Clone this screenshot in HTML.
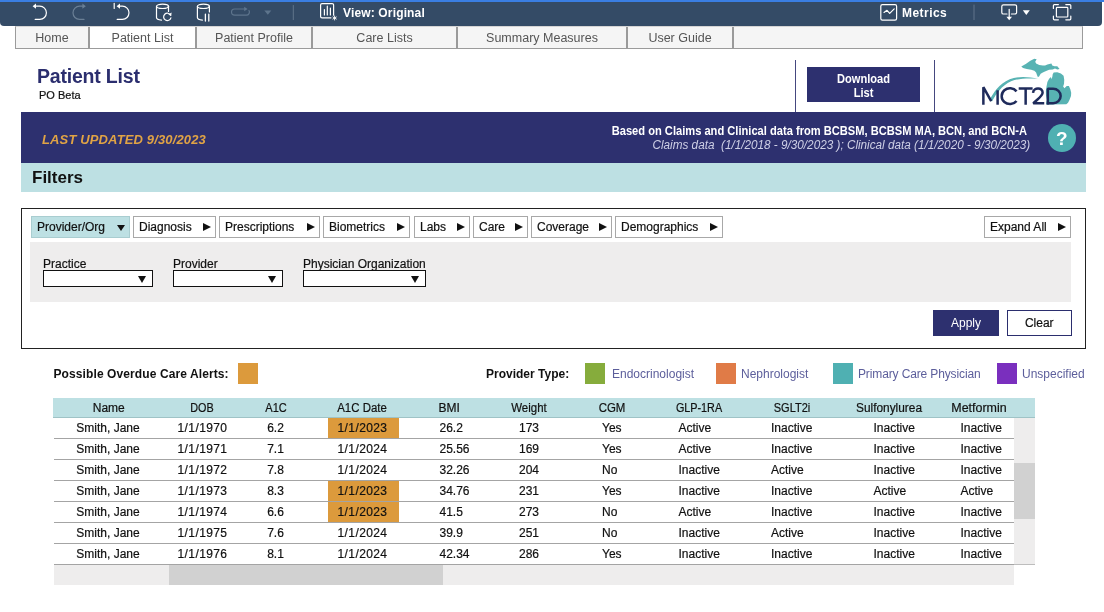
<!DOCTYPE html>
<html>
<head>
<meta charset="utf-8">
<title>Patient List</title>
<style>
*{box-sizing:border-box;margin:0;padding:0}
html,body{width:1104px;height:612px;overflow:hidden;background:#fff}
body{font-family:"Liberation Sans",sans-serif;color:#111;position:relative;will-change:transform}
.abs{position:absolute}
#blue{left:0;top:0;width:1104px;height:2px;background:#3a7ee2}
#tb{left:0;top:2px;width:1101.5px;height:23.6px;background:#344b66;border-radius:0 0 4px 4px}
#tb svg{position:absolute;top:0;left:0}
.tbt{position:absolute;color:#fff;font-weight:bold;font-size:12px;line-height:20px;white-space:nowrap}
#tabs{left:15px;top:26px;width:1068px;height:23px;background:#f5f5f5;border:1px solid #9b9b9b;border-top-color:#d4d4d4}
.tab{position:absolute;top:0;height:21px;border-right:2px solid #9a9a9a;font-size:12.5px;line-height:22px;color:#555;text-align:center;white-space:nowrap}
.tab.sel{background:#fff}
#title{left:37px;top:64px;font-size:19.5px;letter-spacing:-0.2px;font-weight:bold;color:#2b2e6e;line-height:24px;white-space:nowrap}
#sub{-webkit-text-stroke:0.2px #111;left:39px;top:88px;font-size:11px;line-height:14px;color:#111;white-space:nowrap}
.vl{width:1.4px;background:#45477f;top:59.5px;height:53px}
#dl{left:807px;top:67px;width:113px;height:35px;background:#2d306f;color:#fff;font-weight:bold;font-size:12px;line-height:14px;text-align:center;padding-top:5px}
#dl span{display:block;transform:scaleX(0.925)}
#navy{left:21px;top:112px;width:1065px;height:51px;background:#2d306f}
#lu{left:42px;top:132px;letter-spacing:0.14px;font-size:13px;line-height:16px;font-weight:bold;font-style:italic;color:#e0a345;white-space:nowrap}
#b1{right:77px;top:124px;font-size:12px;line-height:14px;font-weight:bold;color:#fff;white-space:nowrap;text-align:right;transform:scaleX(0.927);transform-origin:100% 50%}
#b2{right:74px;top:138px;font-size:12px;line-height:14px;font-style:italic;color:#cfd0e6;white-space:nowrap;text-align:right;transform:scaleX(0.978);transform-origin:100% 50%}
#q{left:1047.6px;top:123.8px;width:28.4px;height:28.4px;border-radius:50%;background:#4fb0b2;color:#fff;font-weight:bold;font-size:19px;line-height:30px;text-align:center}
#band{left:21px;top:163px;width:1065px;height:29px;background:#bde0e3}
#filters{left:32px;top:167px;font-size:17px;line-height:22px;font-weight:bold;color:#111}
#fbox{left:21px;top:208px;width:1065px;height:141px;border:1px solid #222;background:#fff}
#grey{left:30px;top:242px;width:1041px;height:60px;background:#eeeded}
.fb{-webkit-text-stroke:0.2px #111;position:absolute;top:216px;height:22px;border:1px solid #a8a8a8;background:#fff;font-size:12px;line-height:21px;color:#111;white-space:nowrap;padding-left:5px}
.fb.sel{background:#bde0e3;border-color:#a9cdd0}
.fb i{position:absolute;right:4.2px;top:6px;width:0;height:0;border-left:8px solid #111;border-top:4px solid transparent;border-bottom:4px solid transparent}
.fb i.dn{right:4.5px;top:8px;border-left:4px solid transparent;border-right:4px solid transparent;border-top:6.5px solid #111;border-bottom:0}
.lbl{-webkit-text-stroke:0.2px #111;position:absolute;top:257px;font-size:12px;line-height:14px;white-space:nowrap}
.sel2{position:absolute;top:270px;height:17px;border:1px solid #111;background:#fff}
.sel2:after{content:"";position:absolute;right:6px;top:5px;border-left:4px solid transparent;border-right:4px solid transparent;border-top:7px solid #111}
#apply{left:933px;top:310px;width:66px;height:26px;background:#2d306f;color:#fff;font-size:12px;line-height:26px;text-align:center}
#clear{-webkit-text-stroke:0.2px #111;left:1007px;top:310px;width:64.5px;height:26px;background:#fff;border:1px solid #2b2e6e;color:#111;font-size:12px;line-height:24px;text-align:center}
.lg{position:absolute;top:367px;font-size:12px;line-height:14px;white-space:nowrap}
.sw{position:absolute;top:363px;width:20px;height:21px}
.lt{color:#5c5e9b}
#thead{left:53px;top:398px;width:982px;height:20px;background:#bde0e3;border-bottom:1px solid #9fc3c6}
.row{position:absolute;left:53px;width:961px;height:21px}
.row:after{content:"";position:absolute;left:1px;right:0;bottom:0;height:1px;background:#a4a4a4}
.c{position:absolute;font-size:12px;line-height:20px;white-space:nowrap;color:#111;top:0;-webkit-text-stroke:0.2px #111}
.ctr{text-align:center}
.or{position:absolute;left:275px;top:0;width:71px;height:20px;background:#dc9a3c}
#vs{left:1014px;top:418px;width:21px;height:147px;background:#eeeded;border-bottom:1px solid #bdbdbd}
#vst{left:1014px;top:463px;width:21px;height:56px;background:#d1d1d1}
#hs{left:54px;top:565px;width:960px;height:20px;background:#eeeded}
#hst{left:169px;top:565px;width:274px;height:20px;background:#d1d1d1}
</style>
</head>
<body>
<div id="blue" class="abs"></div>
<div id="tb" class="abs"></div>
<svg class="abs" style="left:0;top:0" width="1104" height="28" viewBox="0 0 1104 28" fill="none" stroke="#fff" stroke-width="1.2" stroke-linecap="round" stroke-linejoin="round">
<!-- undo -->
<path d="M35.5 6.2 H39.8 A6.6 6.6 0 0 1 39.8 19.4 H35.2"/>
<path d="M36 3.6 L32.6 6.2 L36 8.8 Z" fill="#fff" stroke="none"/>
<!-- redo (dim) -->
<g stroke="#6a7f95"><path d="M82.8 6.2 H79.6 A6.6 6.6 0 0 0 79.6 19.4 H84"/></g>
<path d="M82.4 3.6 L85.8 6.2 L82.4 8.8 Z" fill="#6a7f95" stroke="none"/>
<!-- revert -->
<path d="M114.2 3.4 V8.4"/>
<path d="M119.5 6.2 H122.4 A6.6 6.6 0 0 1 122.4 19.4 H117.2"/>
<path d="M120 3.6 L116.6 6.2 L120 8.8 Z" fill="#fff" stroke="none"/>
<!-- cylinder refresh -->
<ellipse cx="162.5" cy="6.3" rx="6" ry="2.2"/>
<path d="M156.5 6.3 V17.6 C156.5 19 159 20 161.5 20.1"/>
<path d="M168.5 6.3 V11.5"/>
<path d="M170.6 15.2 A3.7 3.7 0 1 0 170.9 17.8"/>
<path d="M171.6 12.6 L171.2 16 L168.2 14.6 Z" fill="#fff" stroke="none"/>
<!-- cylinder pause -->
<ellipse cx="203.4" cy="6.3" rx="6" ry="2.2"/>
<path d="M197.4 6.3 V17.6 C197.4 19 199.6 20 202.4 20.1"/>
<path d="M209.4 6.3 V12"/>
<path d="M205.4 14.2 V21 M208.8 14.2 V21" stroke-width="1.3"/>
<!-- pill arrow (dim) -->
<g stroke="#5d748c"><path d="M244.5 9 H234.6 A3.1 3.1 0 0 0 234.6 15.2 H246.3 A3.1 3.1 0 0 0 249 10.5"/></g>
<path d="M244.2 6.8 L247.6 9 L244.2 11.2 Z" fill="#5d748c" stroke="none"/>
<path d="M264.3 10.4 H271.3 L267.8 14.8 Z" fill="#5d748c" stroke="none"/>
<!-- separators -->
<path d="M293.3 5.5 V19.6" stroke="#61758b" stroke-width="1"/>
<path d="M974 5 V19.6" stroke="#61758b" stroke-width="1"/>
<!-- view icon -->
<path d="M333.6 15.2 V5 A1.4 1.4 0 0 0 332.2 3.6 H322 A1.4 1.4 0 0 0 320.6 5 V16.4 A1.4 1.4 0 0 0 322 17.8 H331"/>
<path d="M324.4 9.6 V15 M327.3 6.2 V15 M330.4 8 V15" stroke-width="1.2"/>
<path d="M334.6 16 V20 M332.9 17 L336.3 19 M336.3 17 L332.9 19" stroke-width="0.9"/>
<!-- metrics icon -->
<rect x="880.8" y="4.6" width="15.8" height="15.6" rx="1.6"/>
<path d="M884 12.4 L887 10.3 L889.7 13.3 L894.2 8.8"/>
<!-- download icon -->
<path d="M1007 14 H1003.4 A1.6 1.6 0 0 1 1001.8 12.4 V6.4 A1.6 1.6 0 0 1 1003.4 4.8 H1015 A1.6 1.6 0 0 1 1016.6 6.4 V12.4 A1.6 1.6 0 0 1 1015 14 H1011.4"/>
<path d="M1009.2 9.4 V17.4"/>
<path d="M1006.4 16.8 H1012 L1009.2 20.2 Z" fill="#fff" stroke="none"/>
<path d="M1022.8 10.2 H1029.8 L1026.3 15 Z" fill="#fff" stroke="none"/>
<!-- fullscreen icon -->
<rect x="1056.4" y="7.4" width="11.4" height="9.6" rx="0.8"/>
<path d="M1053.4 8.4 V5.6 A1 1 0 0 1 1054.4 4.6 H1058.4 M1065.8 4.6 H1069.8 A1 1 0 0 1 1070.8 5.6 V8.4 M1070.8 16 V18.8 A1 1 0 0 1 1069.8 19.8 H1065.8 M1058.4 19.8 H1054.4 A1 1 0 0 1 1053.4 18.8 V16"/>
</svg>
<div class="tbt" style="left:343px;top:3px;letter-spacing:0.15px">View: Original</div>
<div class="tbt" style="left:902px;top:3px;letter-spacing:0.45px">Metrics</div>
<div id="tabs" class="abs">
  <div class="tab" style="left:0;width:74px">Home</div>
  <div class="tab sel" style="left:74px;width:107px">Patient List</div>
  <div class="tab" style="left:181px;width:116px">Patient Profile</div>
  <div class="tab" style="left:297px;width:145px">Care Lists</div>
  <div class="tab" style="left:442px;width:170px">Summary Measures</div>
  <div class="tab" style="left:612px;width:106px">User Guide</div>
</div>
<div id="title" class="abs">Patient List</div>
<div id="sub" class="abs">PO Beta</div>
<div class="abs vl" style="left:795px"></div>
<div class="abs vl" style="left:934px"></div>
<div id="dl" class="abs"><span>Download<br>List</span></div>
<svg class="abs" style="left:970px;top:52px" width="120" height="62" viewBox="0 0 1104 570">
<g fill="#58b3b3">
<path d="M472 133 L513 110 L555 81 L592 62 L613 67 L600 90 L608 106 L637 119 L670 125 L691 125 L712 114 L749 106 L757 123 L778 131 L803 131 L824 156 L803 160 L782 152 L761 160 L728 164 L695 177 L670 189 L650 201 L637 222 L625 232 L617 214 L608 189 L592 172 L563 164 L522 156 L488 148 Z"/>
<path d="M770 189 L803 185 L836 197 L861 218 L867 255 L865 292 L857 317 L869 334 L890 313 L910 313 L923 342 L931 375 L929 404 L915 441 L902 466 L886 480 L704 483 L699 474 L708 441 L699 400 L698 359 L704 317 L712 276 L728 247 L745 230 L749 251 L757 230 L761 205 Z"/>
<path d="M180 440 C 215 375 265 295 365 250 C 450 218 540 228 625 245 C 540 240 450 240 378 268 C 290 308 240 385 202 456 Z"/>
</g>
<g fill="none" stroke="#1f2b5b" stroke-width="23" stroke-linejoin="bevel">
<path d="M123 485 V323 L195 452"/>
<path d="M254 485 V352"/>
<path d="M428 362 A76 73 0 1 0 428 450"/>
<path d="M448 336 H576 M512 336 V485"/>
<path d="M580 375 C 585 320 670 322 668 375 C 667 405 630 425 582 472 H 683"/>
<path d="M716 485 V338 H765 A69 67 0 0 1 765 472 H716"/>
</g>
</svg>
<div id="navy" class="abs"></div>
<div id="lu" class="abs">LAST UPDATED 9/30/2023</div>
<div id="b1" class="abs">Based on Claims and Clinical data from BCBSM, BCBSM MA, BCN, and BCN-A</div>
<div id="b2" class="abs">Claims data&nbsp; (1/1/2018 - 9/30/2023 ); Clinical data (1/1/2020 - 9/30/2023)</div>
<div id="q" class="abs">?</div>
<div id="band" class="abs"></div>
<div id="filters" class="abs">Filters</div>
<div id="fbox" class="abs"></div>
<div id="grey" class="abs"></div>
<div class="fb sel" style="left:31px;width:99px">Provider/Org<i class="dn"></i></div>
<div class="fb" style="left:133px;width:83px">Diagnosis<i></i></div>
<div class="fb" style="left:219px;width:101px">Prescriptions<i></i></div>
<div class="fb" style="left:323px;width:87px">Biometrics<i></i></div>
<div class="fb" style="left:414px;width:56px">Labs<i></i></div>
<div class="fb" style="left:473px;width:55px">Care<i></i></div>
<div class="fb" style="left:531px;width:81px">Coverage<i></i></div>
<div class="fb" style="left:615px;width:108px">Demographics<i></i></div>
<div class="fb" style="left:984px;width:87px">Expand All<i></i></div>
<div class="lbl" style="left:43px">Practice</div>
<div class="lbl" style="left:173px">Provider</div>
<div class="lbl" style="left:303px">Physician Organization</div>
<div class="sel2" style="left:43px;width:110px"></div>
<div class="sel2" style="left:173px;width:110px"></div>
<div class="sel2" style="left:303px;width:123px"></div>
<div id="apply" class="abs">Apply</div>
<div id="clear" class="abs">Clear</div>
<div class="lg" style="left:53.5px;font-weight:bold;letter-spacing:0.1px">Possible Overdue Care Alerts:</div>
<div class="sw" style="left:238px;background:#dc9a3c"></div>
<div class="lg" style="left:486px;font-weight:bold">Provider Type:</div>
<div class="sw" style="left:585px;background:#86ac3c"></div>
<div class="lg lt" style="left:612px">Endocrinologist</div>
<div class="sw" style="left:716px;background:#e07b47"></div>
<div class="lg lt" style="left:741px">Nephrologist</div>
<div class="sw" style="left:833px;background:#4fb0b2"></div>
<div class="lg lt" style="left:858px;letter-spacing:-0.13px">Primary Care Physician</div>
<div class="sw" style="left:997px;background:#7a2fbe"></div>
<div class="lg lt" style="left:1022px">Unspecified</div>

<div id="vs" class="abs"></div><div id="vst" class="abs"></div>
<div id="hs" class="abs"></div><div id="hst" class="abs"></div>
<!--ROWS-->
<div id="thead" class="abs">
<div class="c ctr" style="left:5.75px;width:100px">Name</div>
<div class="c ctr" style="left:99px;width:100px;transform:scaleX(0.9)">DOB</div>
<div class="c ctr" style="left:172.6px;width:100px;transform:scaleX(0.92)">A1C</div>
<div class="c ctr" style="left:259.25px;width:100px;transform:scaleX(0.952)">A1C Date</div>
<div class="c ctr" style="left:346.25px;width:100px">BMI</div>
<div class="c ctr" style="left:426px;width:100px;transform:scaleX(0.954)">Weight</div>
<div class="c ctr" style="left:508.6px;width:100px;transform:scaleX(0.954)">CGM</div>
<div class="c ctr" style="left:596.1px;width:100px;transform:scaleX(0.9)">GLP-1RA</div>
<div class="c ctr" style="left:688.6px;width:100px;transform:scaleX(0.917)">SGLT2i</div>
<div class="c ctr" style="left:786.1px;width:100px;transform:scaleX(0.99)">Sulfonylurea</div>
<div class="c ctr" style="left:876.25px;width:100px;transform:scaleX(1.038)">Metformin</div>
</div>
<div class="row" style="top:418px"><div class="or"></div><div class="c ctr" style="left:5px;width:100px">Smith, Jane</div><div class="c ctr" style="left:99.5px;width:100px;letter-spacing:0.4px">1/1/1970</div><div class="c ctr" style="left:172.5px;width:100px">6.2</div><div class="c ctr" style="left:259.5px;width:100px;letter-spacing:0.4px">1/1/2023</div><div class="c" style="left:386.5px">26.2</div><div class="c ctr" style="left:426px;width:100px">173</div><div class="c" style="left:549px">Yes</div><div class="c" style="left:625.5px">Active</div><div class="c" style="left:718px">Inactive</div><div class="c" style="left:820.5px">Inactive</div><div class="c" style="left:907.5px">Inactive</div></div>
<div class="row" style="top:439px"><div class="c ctr" style="left:5px;width:100px">Smith, Jane</div><div class="c ctr" style="left:99.5px;width:100px;letter-spacing:0.4px">1/1/1971</div><div class="c ctr" style="left:172.5px;width:100px">7.1</div><div class="c ctr" style="left:259.5px;width:100px;letter-spacing:0.4px">1/1/2024</div><div class="c" style="left:386.5px">25.56</div><div class="c ctr" style="left:426px;width:100px">169</div><div class="c" style="left:549px">Yes</div><div class="c" style="left:625.5px">Active</div><div class="c" style="left:718px">Inactive</div><div class="c" style="left:820.5px">Inactive</div><div class="c" style="left:907.5px">Inactive</div></div>
<div class="row" style="top:460px"><div class="c ctr" style="left:5px;width:100px">Smith, Jane</div><div class="c ctr" style="left:99.5px;width:100px;letter-spacing:0.4px">1/1/1972</div><div class="c ctr" style="left:172.5px;width:100px">7.8</div><div class="c ctr" style="left:259.5px;width:100px;letter-spacing:0.4px">1/1/2024</div><div class="c" style="left:386.5px">32.26</div><div class="c ctr" style="left:426px;width:100px">204</div><div class="c" style="left:549px">No</div><div class="c" style="left:625.5px">Inactive</div><div class="c" style="left:718px">Active</div><div class="c" style="left:820.5px">Inactive</div><div class="c" style="left:907.5px">Inactive</div></div>
<div class="row" style="top:481px"><div class="or"></div><div class="c ctr" style="left:5px;width:100px">Smith, Jane</div><div class="c ctr" style="left:99.5px;width:100px;letter-spacing:0.4px">1/1/1973</div><div class="c ctr" style="left:172.5px;width:100px">8.3</div><div class="c ctr" style="left:259.5px;width:100px;letter-spacing:0.4px">1/1/2023</div><div class="c" style="left:386.5px">34.76</div><div class="c ctr" style="left:426px;width:100px">231</div><div class="c" style="left:549px">Yes</div><div class="c" style="left:625.5px">Inactive</div><div class="c" style="left:718px">Inactive</div><div class="c" style="left:820.5px">Active</div><div class="c" style="left:907.5px">Active</div></div>
<div class="row" style="top:502px"><div class="or"></div><div class="c ctr" style="left:5px;width:100px">Smith, Jane</div><div class="c ctr" style="left:99.5px;width:100px;letter-spacing:0.4px">1/1/1974</div><div class="c ctr" style="left:172.5px;width:100px">6.6</div><div class="c ctr" style="left:259.5px;width:100px;letter-spacing:0.4px">1/1/2023</div><div class="c" style="left:386.5px">41.5</div><div class="c ctr" style="left:426px;width:100px">273</div><div class="c" style="left:549px">No</div><div class="c" style="left:625.5px">Active</div><div class="c" style="left:718px">Inactive</div><div class="c" style="left:820.5px">Inactive</div><div class="c" style="left:907.5px">Inactive</div></div>
<div class="row" style="top:523px"><div class="c ctr" style="left:5px;width:100px">Smith, Jane</div><div class="c ctr" style="left:99.5px;width:100px;letter-spacing:0.4px">1/1/1975</div><div class="c ctr" style="left:172.5px;width:100px">7.6</div><div class="c ctr" style="left:259.5px;width:100px;letter-spacing:0.4px">1/1/2024</div><div class="c" style="left:386.5px">39.9</div><div class="c ctr" style="left:426px;width:100px">251</div><div class="c" style="left:549px">No</div><div class="c" style="left:625.5px">Inactive</div><div class="c" style="left:718px">Active</div><div class="c" style="left:820.5px">Inactive</div><div class="c" style="left:907.5px">Inactive</div></div>
<div class="row" style="top:544px"><div class="c ctr" style="left:5px;width:100px">Smith, Jane</div><div class="c ctr" style="left:99.5px;width:100px;letter-spacing:0.4px">1/1/1976</div><div class="c ctr" style="left:172.5px;width:100px">8.1</div><div class="c ctr" style="left:259.5px;width:100px;letter-spacing:0.4px">1/1/2024</div><div class="c" style="left:386.5px">42.34</div><div class="c ctr" style="left:426px;width:100px">286</div><div class="c" style="left:549px">Yes</div><div class="c" style="left:625.5px">Inactive</div><div class="c" style="left:718px">Inactive</div><div class="c" style="left:820.5px">Inactive</div><div class="c" style="left:907.5px">Inactive</div></div>
<!--/ROWS-->
</body>
</html>
